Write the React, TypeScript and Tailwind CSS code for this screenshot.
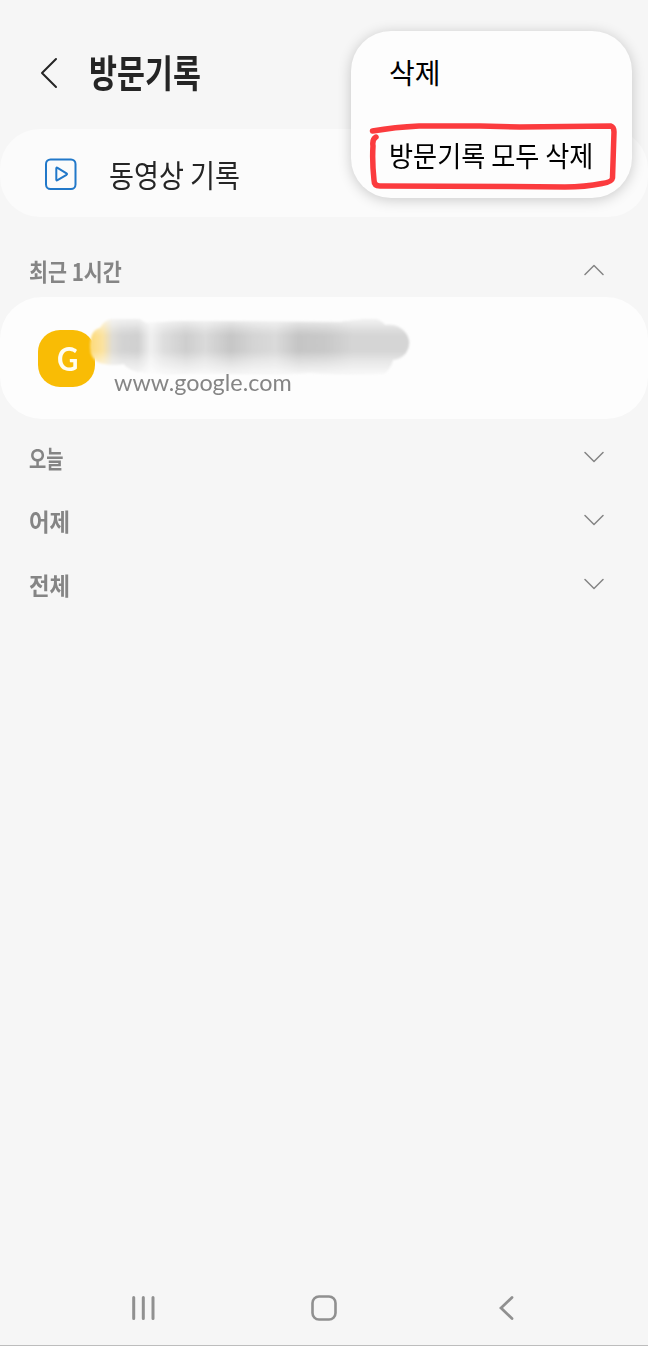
import type { ReactNode } from 'react';

function Chevron({ up = false }: { up?: boolean }) {
  return (
    <svg className="mb-0.5 h-3 w-5 shrink-0" viewBox="0 0 20 12" fill="none" stroke="#858585" strokeWidth="1.5" strokeLinecap="round" strokeLinejoin="round">
      <path d={up ? 'M1 10.5 10 1.5 19 10.5' : 'M1 1.5 10 10.5 19 1.5'} />
    </svg>
  );
}

function Row({ children }: { children: ReactNode }) {
  return (
    <div className="flex h-[63.5px] items-center justify-between pr-11 pl-[29px]">
      {children}
      <Chevron />
    </div>
  );
}

function Smudge() {
  return (
    <svg className="absolute top-[19px] left-[88px] h-[60px] w-[324px]" viewBox="88 316 324 60">
      <defs>
        <linearGradient id="smear" gradientUnits="userSpaceOnUse" x1="90" x2="410" y1="0" y2="0">
          <stop offset="0" stopColor="#fddb79" />
          <stop offset=".04" stopColor="#fbe2a0" />
          <stop offset=".07" stopColor="#dedcd5" />
          <stop offset=".1" stopColor="#d3d3d3" />
          <stop offset=".15" stopColor="#d0d0d0" />
          <stop offset=".19" stopColor="#f0f0f0" />
          <stop offset=".23" stopColor="#dedede" />
          <stop offset=".3" stopColor="#cecece" />
          <stop offset=".36" stopColor="#dadada" />
          <stop offset=".44" stopColor="#c6c6c6" />
          <stop offset=".51" stopColor="#d4d4d4" />
          <stop offset=".58" stopColor="#dadada" />
          <stop offset=".65" stopColor="#c5c5c5" />
          <stop offset=".74" stopColor="#c9c9c9" />
          <stop offset=".82" stopColor="#d5d5d5" />
          <stop offset="1" stopColor="#d5d5d5" />
        </linearGradient>
        <linearGradient id="fade" x1="0" x2="0" y1="0" y2="1">
          <stop offset="0" stopColor="#fff" stopOpacity=".7" />
          <stop offset=".2" stopColor="#fff" stopOpacity=".2" />
          <stop offset=".3" stopColor="#fff" stopOpacity="0" />
          <stop offset=".58" stopColor="#fff" stopOpacity="0" />
          <stop offset=".75" stopColor="#fff" stopOpacity=".4" />
          <stop offset="1" stopColor="#fff" stopOpacity=".85" />
        </linearGradient>
        <filter id="soften" x="-5%" y="-10%" width="110%" height="120%">
          <feGaussianBlur stdDeviation="1" />
        </filter>
        <path id="stroke" d="M90 347Q90 330 100 328Q104 320 113 319H139L146 323L182 321L340 322Q363 319 374 319Q381 320 385 325Q397 323 405 332Q413 342 406 353Q401 359 393 360Q390 371 382 374L310 373L220 374Q145 374 135 371Q127 368 124 364Q110 366 100 363Q90 359 90 347Z" />
      </defs>
      <g filter="url(#soften)">
        <use href="#stroke" fill="url(#smear)" />
        <use href="#stroke" fill="url(#fade)" />
      </g>
    </svg>
  );
}

export default function App() {
  return (
    <div className="relative flex h-[1346px] w-[648px] flex-col overflow-hidden border-b border-[#bdbdbd] bg-[#f6f6f6] font-['Noto_Sans_CJK_KR',sans-serif] whitespace-nowrap">
      <header className="flex h-[129px] items-center pt-4 pl-10">
        <svg className="h-8 w-[18px] shrink-0" viewBox="0 0 18 32" fill="none" stroke="#252525" strokeWidth="2" strokeLinecap="round" strokeLinejoin="round">
          <path d="M16 2 2 16 16 30" />
        </svg>
        <h1 className="mb-1 ml-[31px] origin-left scale-x-[.8] text-[38px] leading-none font-bold text-[#252525]">방문기록</h1>
      </header>

      <section className="flex h-[88px] shrink-0 items-center rounded-[40px] bg-[#fbfbfb] pl-[45px]">
        <svg className="mt-px size-8 shrink-0" viewBox="0 0 32 32" fill="none" stroke="#2178c9" strokeWidth="2" strokeLinejoin="round">
          <rect x="1" y="1.5" width="29.5" height="29.5" rx="4.5" />
          <path d="M11.3 10.5v11q0 1.4 1.2.7l9-5.4q1.1-.8 0-1.5l-9-5.5q-1.2-.7-1.2.7Z" />
        </svg>
        <span className="ml-8 origin-left scale-x-[.875] text-[31px] leading-none text-[#252525]">동영상 기록</span>
      </section>

      <div className="flex h-20 shrink-0 items-center justify-between pt-[27px] pr-11 pl-[29px]">
        <h2 className="origin-left scale-x-[.86] text-2xl leading-none font-bold text-[#858585]">최근 1시간</h2>
        <Chevron up />
      </div>

      <section className="relative flex h-[122px] shrink-0 items-center rounded-[42px] bg-[#fdfdfd] pl-[38px]">
        <div className="flex size-[57px] items-center justify-center rounded-[22px] bg-[#f9bc05] pt-px pl-0.5 font-['Lato',sans-serif] text-[32px] leading-none font-bold text-[#fffdf0]">
          <span className="scale-x-[.92]">G</span>
        </div>
        <Smudge />
        <span className="relative mt-[47px] ml-[19px] origin-left scale-x-[.975] font-['Lato',sans-serif] text-2xl leading-none text-[#858585]">www.google.com</span>
      </section>

      <div className="pt-[7px] text-2xl leading-none font-bold text-[#858585]">
        <Row><h2 className="origin-left scale-x-[.78]">오늘</h2></Row>
        <Row><h2 className="origin-left scale-x-[.93]">어제</h2></Row>
        <Row><h2 className="origin-left scale-x-[.93]">전체</h2></Row>
      </div>

      <nav className="mt-auto flex h-[74px] items-center justify-between pr-[134px] pl-[131px]">
        <svg className="h-6 w-[25px]" viewBox="0 0 25 24" stroke="#909090" strokeWidth="3" strokeLinecap="round">
          <path d="M2.7 1.5v21M12.3 1.5v21M22 1.5v21" />
        </svg>
        <svg className="-ml-2 size-[26px]" viewBox="0 0 26 26" fill="none" stroke="#909090" strokeWidth="2.6">
          <rect x="1.5" y="1.5" width="23" height="23" rx="6.5" />
        </svg>
        <svg className="h-6 w-[15px]" viewBox="0 0 15 24" fill="none" stroke="#909090" strokeWidth="2.8" strokeLinecap="round">
          <path d="M13 1.5 2 12 13 22.5" />
        </svg>
      </nav>

      <div className="absolute top-[31px] left-[351px] flex h-[167px] w-[281px] flex-col rounded-[40px] bg-[#fdfdfd] pl-[38px] text-[28px] leading-none text-black shadow-[0_2px_14px_rgba(0,0,0,0.2)]">
        <div className="flex h-[82px] items-center">
          <span>삭제</span>
        </div>
        <div className="flex h-[84px] items-center">
          <span className="origin-left scale-x-[.935]">방문기록 모두 삭제</span>
        </div>
        <svg className="absolute top-[87px] left-[15px] h-[76px] w-[254px]" viewBox="366 118 254 76" fill="none" stroke="#fb3b3e" strokeWidth="5.5" strokeLinecap="round" strokeLinejoin="round">
          <path d="M372.5 131Q395 127 419 126L480 126L520 127L611 126Q614 127 614 132L612.5 178Q612 182 602 183.5Q585 187 565 187L510 186.5L380 186Q374 186 374 180Q372 161 373 146Q372 139 376 137" />
        </svg>
      </div>
    </div>
  );
}
